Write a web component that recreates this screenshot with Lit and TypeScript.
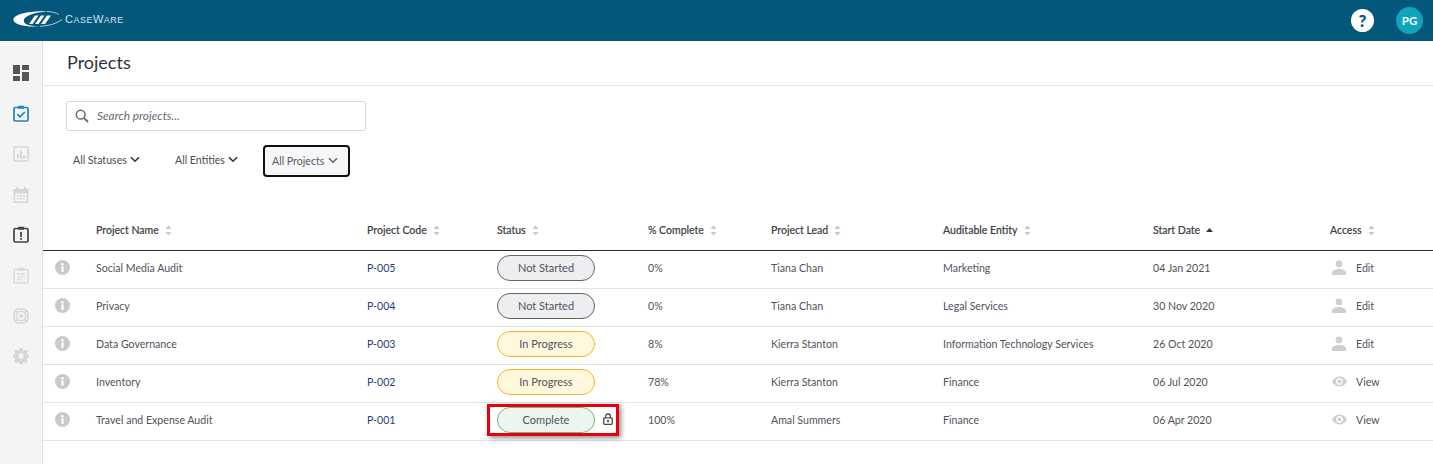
import { LitElement, html, css, svg } from "lit";
import { customElement } from "lit/decorators.js";

type Row = { name: string; code: string; status: string; pct: string; lead: string; entity: string; date: string; access: string };
const rows: Row[] = [
  { name: "Social Media Audit", code: "P-005", status: "Not Started", pct: "0%", lead: "Tiana Chan", entity: "Marketing", date: "04 Jan 2021", access: "Edit" },
  { name: "Privacy", code: "P-004", status: "Not Started", pct: "0%", lead: "Tiana Chan", entity: "Legal Services", date: "30 Nov 2020", access: "Edit" },
  { name: "Data Governance", code: "P-003", status: "In Progress", pct: "8%", lead: "Kierra Stanton", entity: "Information Technology Services", date: "26 Oct 2020", access: "Edit" },
  { name: "Inventory", code: "P-002", status: "In Progress", pct: "78%", lead: "Kierra Stanton", entity: "Finance", date: "06 Jul 2020", access: "View" },
  { name: "Travel and Expense Audit", code: "P-001", status: "Complete", pct: "100%", lead: "Amal Summers", entity: "Finance", date: "06 Apr 2020", access: "View" },
];
const heads = ["Project Name", "Project Code", "Status", "% Complete", "Project Lead", "Auditable Entity", "Start Date", "Access"];

const sortIcon = svg`<svg class="sort" width="7" height="11" viewBox="0 0 7 11"><path d="M3.500 0.500L6.500 4H0.500Z" fill="#c4c7cc"/><path d="M3.500 10.500L0.500 7H6.500Z" fill="#c4c7cc"/></svg>`;
const sortAsc = svg`<svg class="sort" width="7" height="11" viewBox="0 0 7 11"><path d="M3.500 3L7 7H0Z" fill="#333"/></svg>`;
const chevron = (c: string) => html`<svg width="10" height="7" viewBox="0 0 10 7"><path d="M1 1.200L5 5.200L9 1.200" fill="none" stroke="${c}" stroke-width="1.600"/></svg>`;
const infoIcon = html`<svg width="15" height="15" viewBox="0 0 15 15"><circle cx="7.500" cy="7.500" r="7.500" fill="#c9c9c9"/><rect x="6.400" y="6.300" width="2.200" height="5.600" fill="#fff"/><circle cx="7.500" cy="4.200" r="1.250" fill="#fff"/></svg>`;
const userIcon = html`<svg width="14" height="15" viewBox="0 0 14 15"><circle cx="7" cy="3.900" r="3.400" fill="#cfcfcf"/><path d="M0 15V12.600C0 10.200 3.600 9 7 9C10.400 9 14 10.200 14 12.600V15Z" fill="#cfcfcf"/></svg>`;
const eyeIcon = html`<svg width="15" height="11" viewBox="0 0 15 11"><path fill-rule="evenodd" d="M7.500 0.500C4.200 0.500 1.400 2.500 0 5.500C1.400 8.500 4.200 10.500 7.500 10.500C10.800 10.500 13.600 8.500 15 5.500C13.600 2.500 10.800 0.500 7.500 0.500ZM7.500 2C9.400 2 11 3.600 11 5.500C11 7.400 9.400 9 7.500 9C5.600 9 4 7.400 4 5.500C4 3.600 5.600 2 7.500 2Z" fill="#cfcfcf"/><circle cx="7.500" cy="5.500" r="2.100" fill="#cfcfcf"/></svg>`;
const lockIcon = html`<svg width="10" height="12" viewBox="0 0 10 12"><path d="M2.600 5V3.400C2.600 2 3.600 1 5 1C6.400 1 7.400 2 7.400 3.400V5" fill="none" stroke="#4a4a4a" stroke-width="1.300"/><rect x="0.700" y="4.900" width="8.600" height="6.400" rx="0.800" fill="none" stroke="#4a4a4a" stroke-width="1.300"/><rect x="4.100" y="7" width="1.800" height="2.200" fill="#4a4a4a"/></svg>`;

const navIcons = [
  html`<svg width="16" height="18" viewBox="0 0 16 18"><path fill="#555" d="M0 1h7v9H0zM9 1h7v5H9zM0 12h7v5H0zM9 8h7v9H9z"/></svg>`,
  html`<svg width="16" height="17" viewBox="0 0 16 17"><rect x="1" y="2.500" width="14" height="13.500" rx="1.200" fill="none" stroke="#1b87b8" stroke-width="1.700"/><rect x="5" y="0.800" width="6" height="3" rx="0.600" fill="#1b87b8"/><path d="M4.300 9.200L7 11.900L11.800 7" fill="none" stroke="#1b87b8" stroke-width="1.700"/></svg>`,
  html`<svg width="16" height="17" viewBox="0 -1 16 17"><rect x="1" y="1" width="14" height="14" rx="1" fill="none" stroke="#d6d6d6" stroke-width="1.600"/><path fill="#d6d6d6" d="M4 8h2v4.500H4zM7 5h2v7.500H7zM10 9.500h2v3h-2z"/></svg>`,
  html`<svg width="16" height="17" viewBox="0 -1 16 17"><path fill="#d6d6d6" fill-rule="evenodd" d="M3 0h2v2h6V0h2v2h2.500v14H.5V2H3zM2.200 6.500v8h11.600v-8zM4 8h2v1.500H4zM7 8h2v1.500H7zM10 8h2v1.500h-2zM4 11h2v1.500H4zM7 11h2v1.500H7zM10 11h2v1.500h-2z"/></svg>`,
  html`<svg width="16" height="17" viewBox="0 0 16 17"><rect x="1" y="2.500" width="14" height="13.500" rx="1.200" fill="none" stroke="#444" stroke-width="1.700"/><rect x="5" y="0.800" width="6" height="3" rx="0.600" fill="#444"/><rect x="7.100" y="5.800" width="1.800" height="5.200" fill="#444"/><rect x="7.100" y="12" width="1.800" height="1.800" fill="#444"/></svg>`,
  html`<svg width="16" height="17" viewBox="0 0 16 17"><rect x="1" y="2.500" width="14" height="13.500" rx="1.200" fill="none" stroke="#dadada" stroke-width="1.600"/><rect x="5" y="0.800" width="6" height="3" rx="0.600" fill="#dadada"/><path stroke="#dadada" stroke-width="1.300" d="M4 7h8M4 9.800h8M4 12.600h5.500"/></svg>`,
  html`<svg width="16" height="16" viewBox="0 0 16 16"><g fill="none" stroke="#d6d6d6" stroke-width="1.500"><rect x="1" y="1" width="14" height="14" rx="5"/><circle cx="8" cy="8" r="4.700"/><path d="M2 2L5 5M14 2L11 5M2 14L5 11M14 14L11 11"/></g><circle cx="8" cy="8" r="2" fill="#d6d6d6"/></svg>`,
  html`<svg width="16" height="16" viewBox="0 0 16 16"><path fill="#d6d6d6" fill-rule="evenodd" d="M6.600 0h2.800l.4 2.200 1.200.5L12.900 1.400l2 2-1.300 1.900.5 1.200 2.200.4v2.800l-2.200.4-.5 1.200 1.300 1.900-2 2-1.900-1.300-1.200.5-.4 2.200H6.600l-.4-2.200-1.200-.5-1.900 1.300-2-2 1.300-1.900-.5-1.200L-.3 9.700V6.900l2.200-.4.5-1.200L1.100 3.400l2-2L5 2.700l1.200-.5zM8 5.300a2.700 2.700 0 1 0 0 5.400 2.700 2.700 0 0 0 0-5.400z"/></svg>`,
];

@customElement("app-root")
export class AppRoot extends LitElement {
  static styles = css`
    :host { display: block; width: 1433px; height: 464px; overflow: hidden; background: #fff; font-family: Lato, sans-serif; font-size: 10.600px; color: #4a4a55; }
    .top { height: 41px; background: #03577b; display: flex; align-items: center; padding: 0 10px 0 13px; }
    .logo { display: flex; align-items: center; gap: 3px; margin-top: -2px; }
    .logo svg { display: block; }
    .brand { color: #d5e2ea; font-family: "Liberation Sans", sans-serif; font-size: 9px; letter-spacing: 0.500px; margin-top: -1px; }
    .brand b { font-weight: 400; font-size: 11px; }
    .spacer { flex: 1; }
    .help { width: 23px; height: 23px; border-radius: 50%; background: #fff; color: #03577b; font-weight: 900; font-size: 17px; display: flex; align-items: center; justify-content: center; margin-right: 22px; }
    .avatar { width: 27px; height: 27px; border-radius: 50%; background: #0ea5bd; color: #fff; font-weight: 700; font-size: 11.500px; display: flex; align-items: center; justify-content: center; }
    .body { display: flex; height: 423px; }
    .side { width: 42px; background: #f4f4f4; border-right: 1px solid #dcdde2; display: flex; flex-direction: column; align-items: center; padding-top: 23px; }
    .nav { height: 40.600px; width: 42px; display: flex; justify-content: center; align-items: flex-start; }
    .main { flex: 1; min-width: 0; }
    .title { height: 42px; padding-bottom: 2px; border-bottom: 1px solid #e2e3e6; padding-left: 24px; display: flex; align-items: center; font-size: 18px; color: #2f3237; }
    .search { margin: 15px 0 0 23px; width: 290px; height: 26px; border: 1px solid #d5d7dc; border-radius: 2px; display: flex; align-items: center; padding: 0 0 2px 8px; gap: 8px; font-style: italic; font-size: 11.800px; color: #666a73; }
    .search svg { margin-top: 2px; }
    .filters { margin: 14px 0 0 20px; display: flex; align-items: center; height: 32px; }
    .filter { display: flex; align-items: center; gap: 3px; padding: 0 0 3px 10px; height: 32px; color: #4a4a55; box-sizing: border-box; white-space: nowrap; }
    .filter.a { width: 102px; }
    .filter.b { width: 98px; padding-left: 10px; }
    .filter.c { border: 2px solid #111; border-radius: 4px; background: #f6f7f9; width: 87px; padding-left: 7px; padding-bottom: 1px; color: #555a66; gap: 4px; }
    table { border-collapse: collapse; table-layout: fixed; width: 1390px; margin-top: 34px; }
    th { height: 39px; text-align: left; font-weight: 700; color: #3c3f48; border-bottom: 1px solid #2c2c2c; padding: 0 0 1px; box-sizing: border-box; }
    th span { font-weight: 500; font-size: 10.500px; -webkit-text-stroke: 0.150px #3c3f48; }
    .sort { margin-left: 6px; vertical-align: -2px; }
    td { height: 38px; box-sizing: border-box; padding: 0 0 3px; border-bottom: 1px solid #e3e4e7; color: #50525c; }
    td.code { color: #2f3a78; }
    .info { padding-left: 12px; }
    .info svg { display: block; }
    .pillwrap { display: flex; align-items: center; position: relative; width: 124px; }
    .pill { width: 96px; height: 24px; border-radius: 13px; border: 1px solid; display: flex; align-items: center; justify-content: center; color: #50525c; font-size: 11px; }
    .ns { background: #edeef0; border-color: #60646c; }
    .ip { background: #fff8dc; border-color: #f5b52a; }
    .co { background: #edf6ee; border-color: #6fbb76; }
    .lock { margin-left: 8px; display: block; }
    .mark { position: absolute; left: -10px; top: -3px; width: 126px; height: 26px; border: 3px solid #e8000f; box-shadow: 2px 2px 5px rgba(0,0,0,.45); pointer-events: none; }
    .acc { display: flex; align-items: center; }
    .acc .ic { width: 26px; display: flex; justify-content: flex-start; padding-left: 2px; box-sizing: border-box; }
  `;

  render() {
    const w = [53, 271, 130, 151, 123, 172, 210, 177, 103];
    return html`
      <div class="top">
        <div class="logo">
          <svg width="49" height="19" viewBox="0 0 49 19">
            <path fill="#fff" d="M34 1.500C16 .5 0 4.500 .5 10C1 14.500 13 17.500 27 16.300C15 16.300 9.500 13.500 11 9.500C12.500 5.500 22 2.200 34 1.500Z"/>
            <path fill="#fff" d="M16 14L22 5.500H25.500L19.500 14ZM22 14L28 5.500H31.500L25.500 14ZM28 14L34 5.500H38L32 14Z"/>
            <path fill="none" stroke="#dfe9ef" stroke-width=".8" d="M34 1.500C40 1.800 45 3.200 46 5M27 16.300C36 15.800 44 13.500 49 9.500"/>
          </svg>
          <span class="brand"><b>C</b>ASE<b>W</b>ARE</span>
        </div>
        <div class="spacer"></div>
        <div class="help">?</div>
        <div class="avatar">PG</div>
      </div>
      <div class="body">
        <div class="side">${navIcons.map((i) => html`<div class="nav">${i}</div>`)}</div>
        <div class="main">
          <div class="title">Projects</div>
          <div class="search">
            <svg width="14" height="14" viewBox="0 0 14 14"><circle cx="5.700" cy="5.700" r="4.400" fill="none" stroke="#5f6b7a" stroke-width="1.500"/><path d="M9 9L13 13" stroke="#5f6b7a" stroke-width="1.800"/></svg>
            <span>Search projects...</span>
          </div>
          <div class="filters">
            <div class="filter a">All Statuses ${chevron("#333")}</div>
            <div class="filter b">All Entities ${chevron("#333")}</div>
            <div class="filter c">All Projects ${chevron("#666")}</div>
          </div>
          <table>
            <colgroup>${w.map((x) => html`<col style="width:${x}px" />`)}</colgroup>
            <thead>
              <tr>
                <th></th>
                ${heads.map((h) => html`<th><span>${h}</span>${h === "Start Date" ? sortAsc : sortIcon}</th>`)}
              </tr>
            </thead>
            <tbody>
              ${rows.map((r) => html`
                <tr>
                  <td class="info">${infoIcon}</td>
                  <td>${r.name}</td>
                  <td class="code">${r.code}</td>
                  <td>
                    <div class="pillwrap">
                      <div class="pill ${r.status === "Complete" ? "co" : r.status === "In Progress" ? "ip" : "ns"}">${r.status}</div>
                      ${r.status === "Complete" ? html`<span class="lock">${lockIcon}</span><div class="mark"></div>` : ""}
                    </div>
                  </td>
                  <td>${r.pct}</td>
                  <td>${r.lead}</td>
                  <td>${r.entity}</td>
                  <td>${r.date}</td>
                  <td><div class="acc"><span class="ic">${r.access === "Edit" ? userIcon : eyeIcon}</span>${r.access}</div></td>
                </tr>`)}
            </tbody>
          </table>
        </div>
      </div>
    `;
  }
}
